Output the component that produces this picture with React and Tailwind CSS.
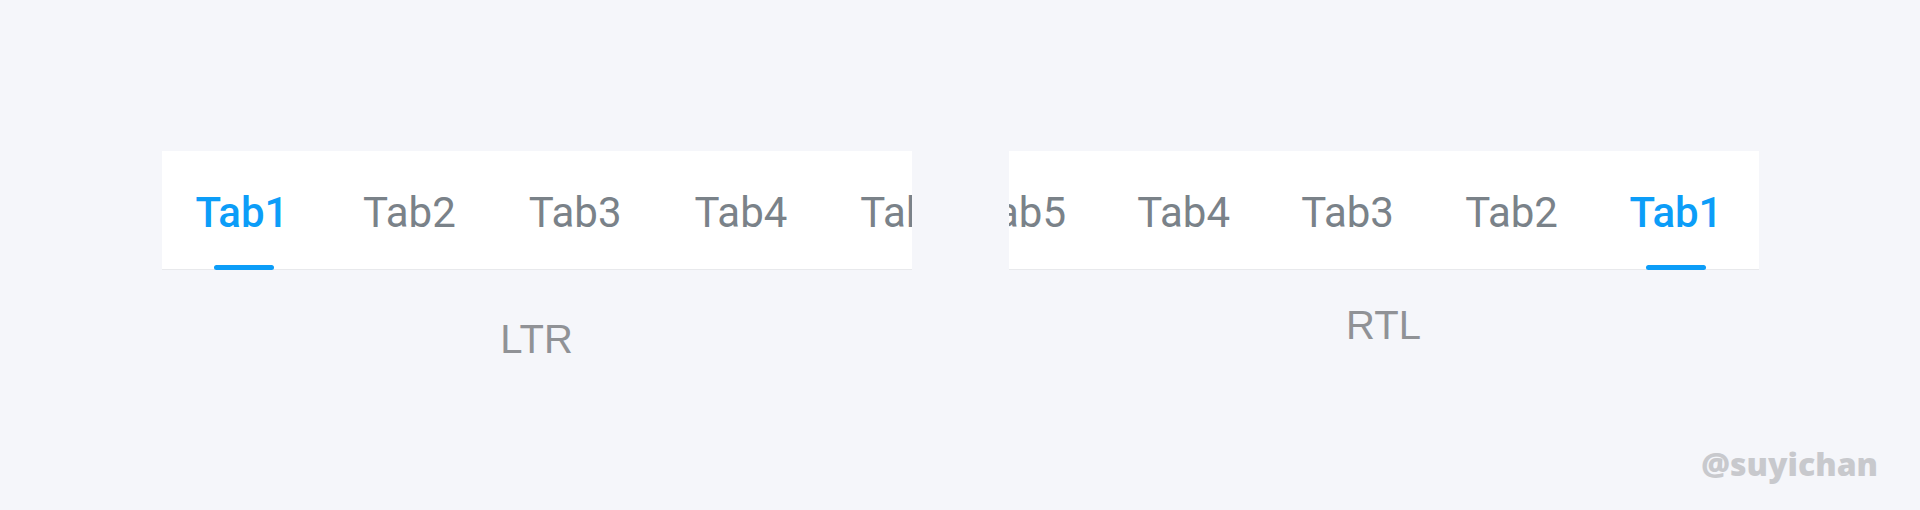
import React from "react";

const tabs = ["Tab1", "Tab2", "Tab3", "Tab4", "Tab5"];

const TabBar = ({ dir }) => {
  const rtl = dir === "rtl";
  const first = rtl
    ? "relative h-full shrink-0 px-[36px] pt-[41px] text-[42px] leading-[42px] font-medium text-[#0c9df8]"
    : "relative h-full shrink-0 pl-[34px] pr-[38px] pt-[41px] text-[42px] leading-[42px] font-medium text-[#0c9df8]";
  const rest = rtl
    ? "relative h-full shrink-0 px-[35.6px] pt-[41px] text-[42px] leading-[42px] text-[#7a8289]"
    : "relative h-full shrink-0 px-[36.5px] pt-[41px] text-[42px] leading-[42px] text-[#7a8289]";
  return (
    <div
      dir={dir}
      className="relative h-[119px] w-[750px] overflow-hidden bg-white shadow-[inset_0_-1px_0_#e8e9ec]"
    >
      <div className="flex h-full">
        {tabs.map((t, i) => (
          <div key={t} className={i === 0 ? first : rest}>
            <span dir="ltr">{t}</span>
            {i === 0 && (
              <div className="absolute bottom-0 left-1/2 h-[5px] w-[60px] -translate-x-1/2 rounded-full bg-[#0c9df8]" />
            )}
          </div>
        ))}
      </div>
    </div>
  );
};

export default function App() {
  return (
    <div
      className="relative h-[510px] w-[1920px] bg-[#f5f6fa]"
      style={{ fontFamily: "Roboto, 'Liberation Sans', sans-serif" }}
    >
      <div className="flex justify-center gap-[97px] pt-[151px]">
        {/* LTR */}
        <div className="flex flex-col items-center">
          <TabBar dir="ltr" />
          <div className="mt-[49px] font-['Liberation_Sans',sans-serif] text-[40px] leading-[40px] text-[#909296]">
            LTR
          </div>
        </div>
        {/* RTL */}
        <div className="flex flex-col items-center">
          <TabBar dir="rtl" />
          <div className="mt-[35px] font-['Liberation_Sans',sans-serif] text-[40px] leading-[40px] text-[#909296]">
            RTL
          </div>
        </div>
      </div>
      <div className="absolute right-[42px] bottom-[30px] font-['Open_Sans',sans-serif] text-[32px] leading-[32px] font-extrabold text-[#c8c9cd]">
        @suyichan
      </div>
    </div>
  );
}
